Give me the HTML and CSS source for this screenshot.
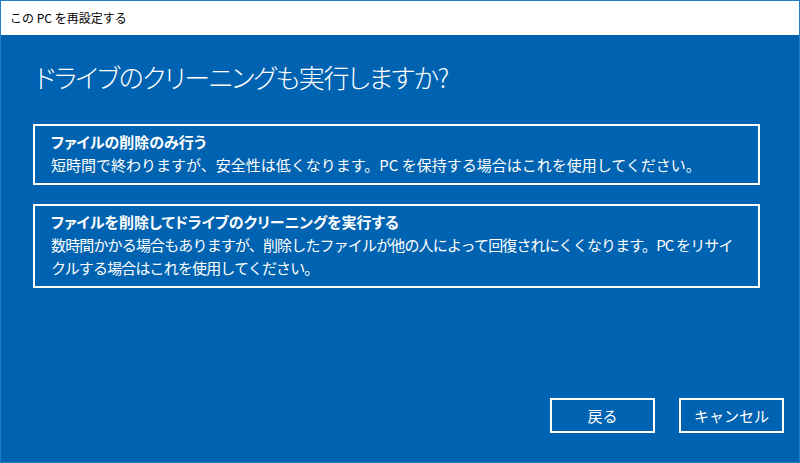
FILE: index.html
```html
<!DOCTYPE html>
<html lang="ja">
<head>
  <meta charset="UTF-8">
  <title>この PC を再設定する</title>
  <link rel="stylesheet" href="styles.css">
</head>
<body>
  <div class="window">
    <div class="titlebar">この PC を再設定する</div>
    <div class="content">
      <h1>ドライブのクリーニングも実行しますか?</h1>
      <div class="option">
        <div class="option-title">ファイルの削除のみ行う</div>
        <div class="option-desc">短時間で終わりますが、安全性は低くなります。PC を保持する場合はこれを使用してください。</div>
      </div>
      <div class="option">
        <div class="option-title">ファイルを削除してドライブのクリーニングを実行する</div>
        <div class="option-desc tight">数時間かかる場合もありますが、削除したファイルが他の人によって回復されにくくなります。PC をリサイクルする場合はこれを使用してください。</div>
      </div>
      <div class="footer">
        <button>戻る</button>
        <button>キャンセル</button>
      </div>
    </div>
  </div>
</body>
</html>
```
FILE: styles.css
```css
body {
  margin: 0;
  font-family: "Noto Sans CJK JP", "Noto Sans", sans-serif;
  background: #0063b1;
}
.window {
  width: 800px;
  height: 463px;
  box-sizing: border-box;
  border: 1px solid #1f7ccb;
  display: flex;
  flex-direction: column;
  background: #0063b1;
  color: #fff;
}
.titlebar {
  height: 34px;
  flex-shrink: 0;
  background: #fff;
  color: #000;
  font-size: 12px;
  line-height: 34px;
  padding-left: 9px;
}
.content {
  flex: 1;
  display: flex;
  flex-direction: column;
  padding: 0 15px 29px 32px;
}
h1 {
  margin: 24px 0 30px 2px;
  font-size: 26px;
  font-weight: 300;
  line-height: 35px;
  letter-spacing: -1.3px;
  font-feature-settings: "palt";
}
.option {
  border: 2px solid #fff;
  padding: 5px 16px 7px;
  margin: 0 24px 19px 0;
}
.option-title {
  font-size: 15px;
  font-weight: 700;
  line-height: 22px;
  font-feature-settings: "palt";
}
.option-desc {
  font-size: 15px;
  line-height: 23px;
}
.option-desc.tight {
  letter-spacing: -0.85px;
}
.footer {
  margin-top: auto;
  display: flex;
  justify-content: flex-end;
  gap: 24px;
}
button {
  width: 105px;
  height: 35px;
  background: transparent;
  border: 2px solid #fff;
  color: #fff;
  font-family: inherit;
  font-size: 15px;
  padding: 0;
}
```
